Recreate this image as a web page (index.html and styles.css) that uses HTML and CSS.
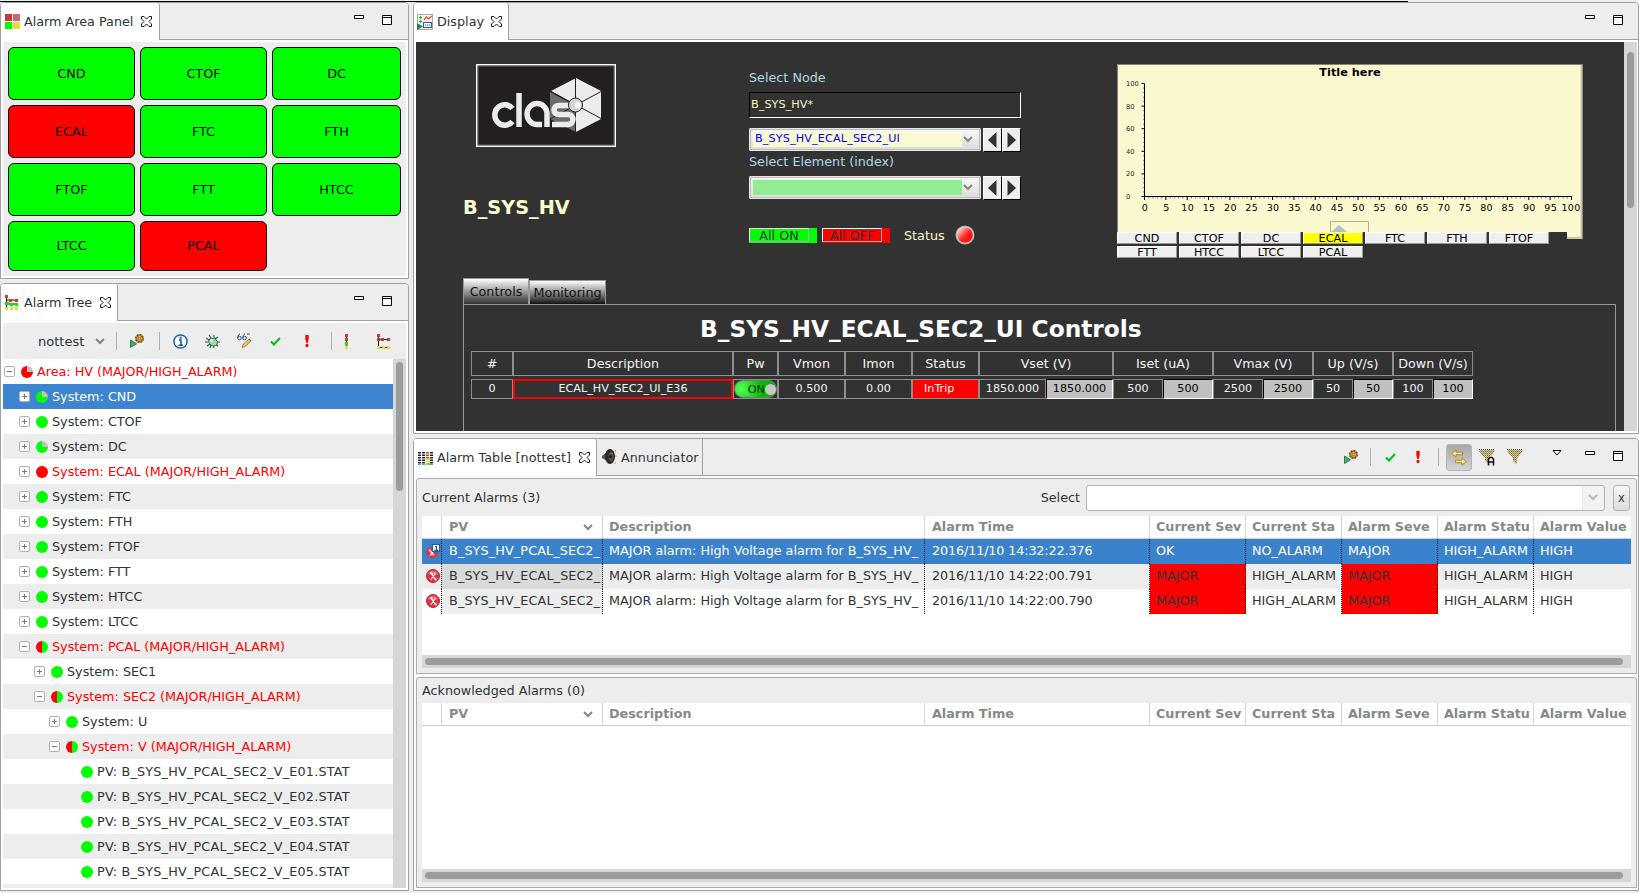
FILE: index.html
```html
<!DOCTYPE html>
<html lang="en">
<head>
<meta charset="utf-8">
<title>Alarm Console</title>
<link rel="stylesheet" href="styles.css">
</head>
<body>
<svg class="defs" width="0" height="0">
  <defs>
    <symbol id="close" viewBox="0 0 11 11"><path d="M.5.5H3L5.500 3 8 .5h2.500V3L8 5.500 10.500 8v2.500H8L5.500 8 3 10.500H.5V8L3 5.500.5 3z" fill="#fff" stroke="#1c1c1c"/></symbol>
    <symbol id="min" viewBox="0 0 10 4"><path d="M.5.5h9v3h-9z" fill="#fff" stroke="#000"/></symbol>
    <symbol id="max" viewBox="0 0 10 10"><path d="M.5.5h9v9h-9zM.5 2.500h9" fill="#fff" stroke="#000"/></symbol>
    <symbol id="chev" viewBox="0 0 10 7"><path d="M1 1l4 4 4-4" fill="none" stroke="#858585" stroke-width="2"/></symbol>
    <symbol id="plus" viewBox="0 0 11 11"><rect x=".5" y=".5" width="10" height="10" rx="1.500" fill="#fff" stroke="#b0b0b0"/><path d="M3 5.500h5M5.500 3v5" stroke="#777"/></symbol>
    <symbol id="minus" viewBox="0 0 11 11"><rect x=".5" y=".5" width="10" height="10" rx="1.500" fill="#fff" stroke="#b0b0b0"/><path d="M3 5.500h5" stroke="#777"/></symbol>
    <symbol id="run" viewBox="0 0 14 14"><path d="M.5 6v7.500L6.500 9.800z" fill="#4fa873" stroke="#2d8050"/><circle cx="9.500" cy="4.500" r="3.800" fill="#e2ad4a" stroke="#7a5213" stroke-width="1.600" stroke-dasharray="2 .9"/><circle cx="9.500" cy="4.500" r="3" fill="#e2ad4a" stroke="#7a5213" stroke-width=".8"/><circle cx="9.500" cy="4.500" r="1.200" fill="#fff4d0" stroke="#6b4510" stroke-width=".8"/></symbol>
    <symbol id="check" viewBox="0 0 11 9"><path d="M1 4.500l3 3L10 1" fill="none" stroke="#00c010" stroke-width="2"/></symbol>
    <symbol id="bang" viewBox="0 0 4 12"><path d="M.3 0h3.400v4L2.700 8H1.300L.3 4z" fill="#f00"/><rect x=".5" y="9" width="3" height="3" rx="1" fill="#f00"/></symbol>
    <symbol id="err" viewBox="0 0 14 14"><circle cx="7" cy="7" r="6.500" fill="#e0323f" stroke="#b02a35"/><path d="M2 5a5.500 5.500 0 0 1 10 0c-3 1.500-7 1.500-10 0z" fill="#f08088" opacity=".7"/><path d="M5 4l4.500 6.500M9.500 4L5 10.500M4 4h2.500M8.500 10.500H11" stroke="#fff" stroke-width="1.300"/></symbol>
    <pattern id="dither" width="2" height="2" patternUnits="userSpaceOnUse"><rect width="2" height="2" fill="#e3cd8e"/><rect width="1" height="1" fill="#6f6a50"/><rect x="1" y="1" width="1" height="1" fill="#9a8f68"/></pattern>
    <symbol id="funnel" viewBox="0 0 16 16"><path d="M.5 1h15v2L10 9v6.500L6 12V9L.5 3z" fill="url(#dither)"/><path d="M0 .5h16" stroke="#444" stroke-dasharray="1 1"/></symbol>
    <linearGradient id="led" x2="1" y2="1"><stop stop-color="#fff"/><stop offset=".55" stop-color="#f22"/><stop offset="1" stop-color="#f00"/></linearGradient>
  </defs>
</svg>

<div class="topline"></div>
<div class="workbench">
  <div class="left">
    <section class="view area">
      <header class="tabs">
        <div class="tab active">
          <svg class="ico" width="15" height="15"><path fill="#cf3636" d="M0 0h7v7H0z"/><path fill="#c86a6a" d="M8 0h7v7H8z"/><path fill="#0f0" d="M0 8h7v7H0z"/><path fill="#e9d93c" d="M8 8h7v7H8z"/></svg>
          <span class="lbl">Alarm Area Panel</span><svg class="x" width="11" height="11"><use href="#close"/></svg>
        </div>
        <div class="winbtns"><svg width="10" height="4"><use href="#min"/></svg><svg width="10" height="10"><use href="#max"/></svg></div>
      </header>
      <div class="area-grid">
        <b>CND</b><b>CTOF</b><b>DC</b>
        <b class="bad">ECAL</b><b>FTC</b><b>FTH</b>
        <b>FTOF</b><b>FTT</b><b>HTCC</b>
        <b class="last">LTCC</b><b class="bad last">PCAL</b>
      </div>
    </section>

    <section class="view tree">
      <header class="tabs">
        <div class="tab active">
          <svg class="ico" width="15" height="15"><path d="M1.500 0v14M2 5h11M2 9h11" stroke="#111" fill="none"/><path fill="#cf3636" d="M0 0h3v3H0zM4 4h3v3H4zM10 4h3v3h-3z"/><path fill="#0e0" d="M0 7h4v3H0zM5 8h3v3H5zM10 8h3v3h-3z"/><path fill="#e9d93c" d="M0 12h3v3H0zM5 12h3v3H5zM10 12h3v3h-3z"/></svg>
          <span class="lbl">Alarm Tree</span><svg class="x" width="11" height="11"><use href="#close"/></svg>
        </div>
        <div class="winbtns"><svg width="10" height="4"><use href="#min"/></svg><svg width="10" height="10"><use href="#max"/></svg></div>
      </header>
      <div class="toolbar">
        <span class="cfg">nottest</span><svg class="t-chev" width="10" height="7"><use href="#chev"/></svg>
        <i class="sep"></i>
        <svg class="t-run" width="14" height="14"><use href="#run"/></svg>
        <i class="sep s2"></i>
        <svg class="t-info" width="15" height="15" viewBox="0 0 15 15"><circle cx="7.500" cy="7.500" r="6.600" fill="#fff" stroke="#1762b4" stroke-width="1.500"/><path d="M6 6h2v5M5.500 11.300h4.500" stroke="#0d4fa0" stroke-width="1.500" fill="none"/><rect x="6.600" y="2.700" width="2" height="2" fill="#0d4fa0"/></svg>
        <svg class="t-bug" width="15" height="15" viewBox="0 0 15 15"><path d="M1 4l3 2M0 8h3M2 12l3-2M4 1l2 3M9 1v3M13 3l-3 2M15 8h-4M13 12l-3-2M9 14l-1-3M5 14l1-3" stroke="#1d5a4c" stroke-width="1.100"/><ellipse cx="8" cy="8" rx="4.500" ry="3.600" fill="#a8d89a" stroke="#1d6a5c" transform="rotate(30 8 8)"/><circle cx="6.500" cy="6.500" r="1.200" fill="#e6ffe0"/></svg>
        <svg class="t-edit" width="15" height="16" viewBox="0 0 15 16"><path d="M3 .8C1 2 .5 4 1 5M8 .8C6.500 1.500 6 3 6 5M10 1h3" stroke="#35528c" fill="none"/><circle cx="2.500" cy="5" r="1.800" fill="none" stroke="#35528c"/><circle cx="7.500" cy="5" r="1.800" fill="none" stroke="#35528c"/><path d="M5 14.500l1-3L12 6l2 2-6 5.500z" fill="#efc36b" stroke="#8c6b38" stroke-width=".8"/><path d="M12 6l2 2" stroke="#777" stroke-width="1.500"/></svg>
        <svg class="t-check" width="11" height="9"><use href="#check"/></svg>
        <svg class="t-bang" width="4" height="12"><use href="#bang"/></svg>
        <i class="sep s3"></i>
        <svg class="t-col" width="3" height="15"><path d="M1.500 0v15" stroke="#111"/><path fill="#cf3636" d="M0 0h3v3H0zM0 4h3v3H0z"/><path fill="#0e0" d="M0 8h3v3H0z"/><path fill="#e9d93c" d="M0 12h3v3H0z"/></svg>
        <svg class="t-exp" width="13" height="15"><path d="M1.500 0v14M2 5.500h11M2 13.500h11" stroke="#111" fill="none"/><path fill="#cf3636" d="M0 0h3v3H0zM4 4h3v3H4zM10 4h3v3h-3zM0 4h3v3H0z"/><path fill="#e9d93c" d="M0 12h3v3H0zM5 12h3v3H5zM10 12h3v3h-3z"/></svg>
      </div>
      <div class="tree-body">
        <ul class="nodes">
          <li class="l0 alarm"><svg width="11" height="11"><use href="#minus"/></svg><i class="dot r q"></i>Area: HV (MAJOR/HIGH_ALARM)</li>
          <li class="l1 sel"><svg width="11" height="11"><use href="#plus"/></svg><i class="dot q"></i>System: CND</li>
          <li class="l1"><svg width="11" height="11"><use href="#plus"/></svg><i class="dot"></i>System: CTOF</li>
          <li class="l1"><svg width="11" height="11"><use href="#plus"/></svg><i class="dot q"></i>System: DC</li>
          <li class="l1 alarm"><svg width="11" height="11"><use href="#plus"/></svg><i class="dot r"></i>System: ECAL (MAJOR/HIGH_ALARM)</li>
          <li class="l1"><svg width="11" height="11"><use href="#plus"/></svg><i class="dot"></i>System: FTC</li>
          <li class="l1"><svg width="11" height="11"><use href="#plus"/></svg><i class="dot"></i>System: FTH</li>
          <li class="l1"><svg width="11" height="11"><use href="#plus"/></svg><i class="dot"></i>System: FTOF</li>
          <li class="l1"><svg width="11" height="11"><use href="#plus"/></svg><i class="dot"></i>System: FTT</li>
          <li class="l1"><svg width="11" height="11"><use href="#plus"/></svg><i class="dot"></i>System: HTCC</li>
          <li class="l1"><svg width="11" height="11"><use href="#plus"/></svg><i class="dot"></i>System: LTCC</li>
          <li class="l1 alarm"><svg width="11" height="11"><use href="#minus"/></svg><i class="dot h"></i>System: PCAL (MAJOR/HIGH_ALARM)</li>
          <li class="l2"><svg width="11" height="11"><use href="#plus"/></svg><i class="dot"></i>System: SEC1</li>
          <li class="l2 alarm"><svg width="11" height="11"><use href="#minus"/></svg><i class="dot h"></i>System: SEC2 (MAJOR/HIGH_ALARM)</li>
          <li class="l3"><svg width="11" height="11"><use href="#plus"/></svg><i class="dot"></i>System: U</li>
          <li class="l3 alarm"><svg width="11" height="11"><use href="#minus"/></svg><i class="dot h"></i>System: V (MAJOR/HIGH_ALARM)</li>
          <li class="pv"><i class="dot"></i>PV: B_SYS_HV_PCAL_SEC2_V_E01.STAT</li>
          <li class="pv"><i class="dot"></i>PV: B_SYS_HV_PCAL_SEC2_V_E02.STAT</li>
          <li class="pv"><i class="dot"></i>PV: B_SYS_HV_PCAL_SEC2_V_E03.STAT</li>
          <li class="pv"><i class="dot"></i>PV: B_SYS_HV_PCAL_SEC2_V_E04.STAT</li>
          <li class="pv"><i class="dot"></i>PV: B_SYS_HV_PCAL_SEC2_V_E05.STAT</li>
          <li></li>
        </ul>
        <div class="vbar"><i></i></div>
      </div>
    </section>
  </div>

  <div class="right">
    <section class="view display">
      <header class="tabs">
        <div class="tab active">
          <svg class="ico" width="16" height="16" viewBox="0 0 16 16"><rect x=".5" y=".5" width="15" height="15" fill="#f2f2f2" stroke="#aaa"/><path d="M7 6l2.500-3 2 2L15 2" stroke="#e8501c" fill="none" stroke-width="1.200"/><path d="M3.500 2v3M2 3.500h3M3.500 6v3M2 7.500h3" stroke="#0c0"/><rect x="6.500" y="8.500" width="8" height="5" fill="#fff" stroke="#1c62d0"/><path d="M8 11h5" stroke="#444" stroke-dasharray="1 1"/><path d="M0 9v7l6-3.500z" fill="#2a8040"/></svg>
          <span class="lbl">Display</span><svg class="x" width="11" height="11"><use href="#close"/></svg>
        </div>
        <div class="winbtns"><svg width="10" height="4"><use href="#min"/></svg><svg width="10" height="10"><use href="#max"/></svg></div>
      </header>
      <div class="scroller">
        <div class="screen">
          <div class="top">
            <div class="brand">
              <svg class="logo" width="140" height="83" viewBox="0 0 140 83">
                <rect x=".75" y=".75" width="138.500" height="81.500" fill="#231f20" stroke="#fff" stroke-width="1.500"/><rect x="2" y="2" width="136" height="79" fill="none" stroke="#777" stroke-width=".8"/>
                <path d="M74 28l26 14v26L74 55z" fill="#6c6c6c"/>
                <path d="M100 14l25 13v28l-25 13V41L75 27z" fill="#ececec"/>
                <path d="M99.500 14v54M100 41l26-14M100 41l26 14M100 41L74 27M100 41L74 55" stroke="#231f20" stroke-width="1"/>
                <g fill="none" stroke="#ececec" stroke-width="5.500"><path d="M36.500 44.500a10 10.200 0 1 0 0 13"/><path d="M43 29v34"/><path d="M71 63V51a10 10.500 0 1 0-10 9.500h5"/><path d="M97 41.500H82.500a4.500 4.500 0 0 0 0 9H92a4.700 4.700 0 0 1 0 10H76"/></g>
                <circle cx="99.500" cy="41" r="7" fill="#d4d4d4" stroke="#231f20"/><circle cx="102" cy="41" r="3" fill="#f6f6f6"/>
              </svg>
              <div class="sysname">B_SYS_HV</div>
            </div>
            <div class="picker">
              <label>Select Node</label>
              <div class="field">B_SYS_HV*</div>
              <div class="pick-row">
                <div class="combo"><span class="val">B_SYS_HV_ECAL_SEC2_UI</span><svg width="10" height="7"><use href="#chev"/></svg></div>
                <div class="arrow"><svg width="9" height="16"><path d="M8.500 0v16L0 8z" fill="#2e3436"/></svg></div>
                <div class="arrow"><svg width="9" height="16"><path d="M.5 0v16L9 8z" fill="#2e3436"/></svg></div>
              </div>
              <label class="second">Select Element (index)</label>
              <div class="pick-row">
                <div class="combo"><span class="val green"></span><svg width="10" height="7"><use href="#chev"/></svg></div>
                <div class="arrow"><svg width="9" height="16"><path d="M8.500 0v16L0 8z" fill="#2e3436"/></svg></div>
                <div class="arrow"><svg width="9" height="16"><path d="M.5 0v16L9 8z" fill="#2e3436"/></svg></div>
              </div>
              <div class="power">
                <div class="all on"><span>All ON</span></div><div class="all off"><span>All OFF</span></div>
                <span class="st">Status</span>
                <svg width="20" height="20"><circle cx="10" cy="10" r="9.500" fill="#aaa"/><circle cx="10" cy="10" r="8.600" fill="#d8d8d8"/><circle cx="10" cy="10" r="7.800" fill="url(#led)"/></svg>
              </div>
            </div>
            <div class="plotbox">
              <svg id="plot" class="plot" width="466" height="175"></svg>
              <div class="secs">
                <span>CND</span><span>CTOF</span><span>DC</span><span class="cur">ECAL</span><span>FTC</span><span>FTH</span><span>FTOF</span>
                <span>FTT</span><span>HTCC</span><span>LTCC</span><span>PCAL</span>
              </div>
            </div>
          </div>
          <div class="hv-tabs"><div class="hv-tab cur">Controls</div><div class="hv-tab">Monitoring</div></div>
          <div class="hv-body">
            <h1>B_SYS_HV_ECAL_SEC2_UI Controls</h1>
            <div class="hv-head"><span>#</span><span>Description</span><span>Pw</span><span>Vmon</span><span>Imon</span><span>Status</span><span>Vset (V)</span><span>Iset (uA)</span><span>Vmax (V)</span><span>Up (V/s)</span><span>Down (V/s)</span></div>
            <div class="hv-row"><span>0</span><span class="desc">ECAL_HV_SEC2_UI_E36</span><span class="pw"><em>ON<i></i></em></span><span>0.500</span><span>0.00</span><span class="trip">InTrip</span><span>1850.000</span><span class="in">1850.000</span><span>500</span><span class="in">500</span><span>2500</span><span class="in">2500</span><span>50</span><span class="in">50</span><span>100</span><span class="in">100</span></div>
          </div>
        </div>
        <div class="vbar"><i></i></div>
      </div>
    </section>

    <section class="view table">
      <header class="tabs">
        <div class="tab active">
          <svg class="ico" width="15" height="14" viewBox="0 0 15 14"><g stroke-dasharray="1.500 1" stroke-width="3"><path d="M1.500 1v13M5.500 1v13M13.500 1v13" stroke="#222"/><path d="M9.500 1v7" stroke="#cf3636"/></g><path d="M8 8.500h4M8 10.500h4" stroke="#e9d93c" stroke-width="1.300"/><path d="M8 13h4" stroke="#0e0" stroke-width="1.500"/></svg>
          <span class="lbl">Alarm Table [nottest]</span><svg class="x" width="11" height="11"><use href="#close"/></svg>
        </div>
        <div class="tab idle">
          <svg width="15" height="16" viewBox="0 0 15 16"><path d="M0 7l5-4v9L0 9z" fill="#555"/><ellipse cx="8" cy="7.500" rx="5" ry="7.500" fill="#2b2b2b"/><ellipse cx="9" cy="7.500" rx="2.500" ry="4.500" fill="#555"/><circle cx="8.500" cy="7.500" r="1.500" fill="#111"/><path d="M13.500 1v2M14 6v2M13 13v2M10 4v1" stroke="#e0a030"/></svg>
          <span class="lbl">Annunciator</span>
        </div>
        <div class="tbl-tools">
          <svg class="a-run" width="14" height="14"><use href="#run"/></svg><i class="sep"></i>
          <svg class="a-check" width="11" height="9"><use href="#check"/></svg>
          <svg class="a-bang" width="4" height="12"><use href="#bang"/></svg><i class="sep"></i>
          <div class="toggle"><svg width="16" height="17" viewBox="0 0 16 17"><path d="M.8 4.500L5 .8v2.400h6.500v2.600H5v2.400z" fill="#fbe8a0" stroke="#b8811c"/><path d="M15.200 12.500L11 8.800v2.400H4.500v2.600H11v2.400z" fill="#fbe8a0" stroke="#b8811c"/></svg></div>
          <div class="fa"><svg width="16" height="16"><use href="#funnel"/></svg><svg class="letter" width="8" height="10"><path d="M1.500 9.500V3L3 1.500h2L6.500 3v6.500M1.500 6h5" fill="none" stroke="#111" stroke-width="1.600"/></svg></div>
          <svg class="a-fun" width="16" height="16"><use href="#funnel"/></svg>
          <svg class="a-menu" width="10" height="6"><path d="M1 .5h8L5 5z" fill="#fff" stroke="#000"/></svg>
        </div>
        <div class="winbtns"><svg width="10" height="4"><use href="#min"/></svg><svg width="10" height="10"><use href="#max"/></svg></div>
      </header>
      <div class="panes">
        <div class="pane cur-pane">
          <div class="pane-top"><span>Current Alarms (3)</span><span class="sel-lbl">Select</span><div class="select"><svg width="10" height="7"><use href="#chev"/></svg></div><div class="clear">x</div></div>
          <div class="grid">
            <div class="row head"><span></span><span class="sorted">PV<svg width="10" height="7"><use href="#chev"/></svg></span><span>Description</span><span>Alarm Time</span><span>Current Sev</span><span>Current Sta</span><span>Alarm Seve</span><span>Alarm Statu</span><span>Alarm Value</span></div>
            <div class="row sel"><span class="ic"><svg width="14" height="16" viewBox="0 0 14 16"><circle cx="6" cy="9.500" r="5.800" fill="#de3340"/><path d="M3 6.500l5 6M8 7l-4 6" stroke="#fff" stroke-width="1.300"/><rect x="6.500" y="1.500" width="7" height="7" fill="#fff" stroke="#1c5fae"/><path d="M9 3.500h1.500v4M8.500 7.300h4" stroke="#1c4f9e" stroke-width="1.200" fill="none"/></svg></span><span class="pvn">B_SYS_HV_PCAL_SEC2_</span><span>MAJOR alarm: High Voltage alarm for B_SYS_HV_</span><span class="time">2016/11/10 14:32:22.376</span><span>OK</span><span>NO_ALARM</span><span>MAJOR</span><span>HIGH_ALARM</span><span>HIGH</span></div>
            <div class="row odd"><span class="ic"><svg width="14" height="14"><use href="#err"/></svg></span><span class="pvn pvc">B_SYS_HV_ECAL_SEC2_</span><span>MAJOR alarm: High Voltage alarm for B_SYS_HV_</span><span class="time">2016/11/10 14:22:00.791</span><span class="major">MAJOR</span><span>HIGH_ALARM</span><span class="major">MAJOR</span><span>HIGH_ALARM</span><span>HIGH</span></div>
            <div class="row"><span class="ic"><svg width="14" height="14"><use href="#err"/></svg></span><span class="pvn pvc">B_SYS_HV_ECAL_SEC2_</span><span>MAJOR alarm: High Voltage alarm for B_SYS_HV_</span><span class="time">2016/11/10 14:22:00.790</span><span class="major">MAJOR</span><span>HIGH_ALARM</span><span class="major">MAJOR</span><span>HIGH_ALARM</span><span>HIGH</span></div>
          </div>
          <div class="hbar"><i></i></div>
        </div>
        <div class="pane ack-pane">
          <div class="pane-top"><span>Acknowledged Alarms (0)</span></div>
          <div class="grid">
            <div class="row head"><span></span><span class="sorted">PV<svg width="10" height="7"><use href="#chev"/></svg></span><span>Description</span><span>Alarm Time</span><span>Current Sev</span><span>Current Sta</span><span>Alarm Seve</span><span>Alarm Statu</span><span>Alarm Value</span></div>
          </div>
          <div class="hbar"><i></i></div>
        </div>
      </div>
    </section>
  </div>
</div>
<script src="plot.js"></script>
</body>
</html>
```

FILE: plot.js
```js
// Draws the empty trend plot: frame, title, both axes with their ticks, and the range marker.
(function () {
  var x0 = 27.5, x1 = 454.5, y0 = 132.5, y1 = 19.5;
  var out = '<rect x="0" y="0" width="466" height="175" fill="#fbf8cf"/>' +
    '<path d="M.5 175V.5H465.500" stroke="#84847c" fill="none"/><path d="M464.500 1V174H0" stroke="#c9c7a8" stroke-width="2" fill="none"/><path d="M465.500 0V175" stroke="#8c8b7c"/>' +
    '<text class="p-title" x="233" y="12">Title here</text>' +
    '<path d="M' + x0 + ' ' + y1 + 'V' + y0 + 'H' + x1 + '" stroke="#000" fill="none"/>';
  var i, x, y;
  for (i = 0; i <= 100; i++) {
    x = x0 + (x1 - x0) * i / 100;
    out += '<path d="M' + x + ' ' + y0 + 'v' + (i % 5 ? 2 : 3.5) + '" stroke="#000" stroke-width="' + (i % 5 ? 0.5 : 1) + '"/>';
    if (i % 5 === 0) out += '<text class="p-x" x="' + (x + 0.5 - (i === 100 ? 1 : 0)) + '" y="147">' + i + '</text>';
  }
  for (i = 0; i <= 100; i += 4) {
    y = y0 + (y1 - y0) * i / 100;
    out += '<path d="M' + x0 + ' ' + y + 'h-' + (i % 20 ? 1.5 : 3) + '" stroke="#000" stroke-width="' + (i % 20 ? 0.5 : 1) + '"/>';
    if (i % 20 === 0) out += '<text class="p-y" x="9" y="' + (y + 2.5) + '">' + i + '</text>';
  }
  out += '<path d="M213.500 168V157.500H251.500V168" stroke="#b0af8f" fill="none"/><path d="M214 168l8-7 8 7z" fill="#adc6be"/>';
  document.getElementById('plot').innerHTML = out;
})();
```

FILE: styles.css
```css
* { box-sizing: border-box; }
body { margin: 0; padding-top: 1px; width: 1639px; height: 893px; overflow: hidden; background: #ededed; font: 12.75px/15px "DejaVu Sans", sans-serif; color: #2e3436; white-space: nowrap; }
svg { display: block; flex: none; }
.defs { position: absolute; }
.topline { width: 1408px; height: 1px; background: #000; }
.workbench { display: flex; gap: 4px; height: 891px; }
.left { width: 409px; display: flex; flex-direction: column; gap: 4px; }
.right { width: 1226px; display: flex; flex-direction: column; gap: 4px; }
.view { border: 1px solid #a0a0a0; border-radius: 4px 4px 0 0; background: #fff; display: flex; flex-direction: column; overflow: hidden; }
.tabs { display: flex; height: 37px; background: #ededed; border-bottom: 1px solid #a0a0a0; flex: none; }
.tab { display: flex; align-items: center; height: 37px; border-right: 1px solid #a0a0a0; flex: none; }
.tab.active { background: #fff; border-radius: 0 3px 0 0; padding-left: 4px; }
.tab .lbl { margin-left: 4px; }
.tab .x { margin-left: 8px; }
.tab.idle { height: 36px; padding-left: 5px; width: 106px; }
.winbtns { margin-left: auto; display: flex; gap: 18px; padding: 12px 16px 0 0; }
.right .winbtns { padding-right: 15px; }

.area { height: 277px; }
.area .tab { width: 159px; }
.area-grid { margin: 2px; flex: 1; background: #ededed; display: grid; grid-template-columns: 127px 127px 129px; grid-template-rows: 53px 53px 53px 50px; gap: 5px; padding: 5px; color: #000; }
.area-grid b { font-weight: normal; display: flex; align-items: center; justify-content: center; background: #0f0; border: 1px solid #000; border-radius: 6px; }
.area-grid b.bad { background: #f00; }
.area-grid b.last { padding-bottom: 2px; }

.tree { height: 608px; }
.tree .tab { width: 117px; }
.toolbar { margin: 2px 2px 0; height: 36px; background: #ededed; display: flex; align-items: center; flex: none; }
.cfg { width: 57px; margin-left: 35px; font-size: 13px; }
.sep { width: 1px; height: 18px; background: #b0b0b0; }
.toolbar .sep { margin-left: 11px; }
.t-run { margin-left: 13px; } .toolbar .s2 { margin-left: 15px; }
.t-info { margin-left: 13px; } .t-bug { margin-left: 17px; } .t-edit { margin-left: 17px; }
.t-check { margin-left: 18px; } .t-bang { margin-left: 24px; } .toolbar .s3 { margin-left: 22px; }
.t-col { margin-left: 13px; } .t-exp { margin-left: 29px; }
.tree-body { margin: 0 2px 2px; height: 529px; overflow: hidden; display: flex; }
.nodes { list-style: none; margin: 0; padding: 0; flex: 1; }
.nodes li { height: 25px; display: flex; align-items: center; }
.nodes li:nth-child(even) { background: #ededed; }
.nodes li.sel { background: #3d85d0; color: #fff; }
.alarm { color: #f00; }
.l0 { padding-left: 1px; } .l1 { padding-left: 16px; } .l2 { padding-left: 31px; } .l3 { padding-left: 46px; }
.nodes .pv { padding-left: 72px; letter-spacing: .2px; }
.dot { width: 12px; height: 12px; border-radius: 50%; background: #0f0; margin: 0 4px 0 6px; }
.dot.r { background: #f00; }
.dot.q { background: conic-gradient(#c0c0c0 90deg, #0f0 0); }
.dot.r.q { background: conic-gradient(#c0c0c0 90deg, #f00 0); }
.dot.h { background: linear-gradient(90deg, #f00 50%, #0f0 50%); }
.vbar { width: 13px; background: #d6d6d6; padding: 3px; flex: none; }
.vbar i { display: block; width: 7px; height: 129px; border-radius: 4px; background: #9b9c9d; }

.display { height: 432px; }
.display .tab { width: 95px; padding-left: 3px; }
.display .tab .x { margin-left: 7px; }
.scroller { margin: 2px 1px 2px 2px; flex: 1; display: flex; overflow: hidden; }
.screen { width: 1208px; height: 389px; background: #323232; overflow: hidden; }
.scroller .vbar { padding-top: 10px; }
.scroller .vbar i { height: 156px; }
.top { display: flex; height: 236px; padding-top: 22px; }
.brand { width: 333px; padding-left: 60px; }
.sysname { margin: 50px 0 0 -13px; font: bold 19.3px/22px "DejaVu Sans", sans-serif; color: #fcfccf; }
.picker { width: 272px; }
.picker label { display: block; color: #add8e6; margin: 6px 0 7px; }
.picker label.second { margin: 3px 0 7px; }
.field { height: 26px; border: 1px solid; border-color: #000 #fff #fff #000; color: #f6f4c4; font-size: 11.3px; line-height: 23px; padding-left: 1px; margin-bottom: 10px; }
.pick-row { display: flex; height: 23px; }
.combo { width: 232px; height: 23px; border: 1px solid #e8e8e8; outline: 1px solid #bbb; outline-offset: -2px; border-radius: 1px; background: linear-gradient(#f8f8f8, #dcdcdc); display: flex; align-items: center; padding-left: 3px; margin-right: 2px; }
.combo .val { width: 209px; height: 15px; margin-right: 1px; background: #fafad2; color: #00f; font-size: 11.2px; letter-spacing: .14px; line-height: 14px; padding-left: 2px; }
.combo .val.green { background: #90ee90; }
.arrow { width: 19px; height: 24px; background: #ededed; border: 1px solid; border-color: #fff #000 #000 #fff; display: flex; align-items: center; justify-content: center; padding-right: 1px; }
.power { display: flex; align-items: center; height: 20px; margin-top: 26px; }
.all { width: 68px; height: 15px; margin-right: 5px; flex: none; }
.all span { display: block; width: 60px; height: 14px; border: 1px solid; border-color: #fff #aaa #aaa #fff; text-align: center; line-height: 13px; }
.on { background: #0f0; } .off { background: #f00; }
.st { color: #fafad2; margin: 0 9px; width: 42px; }
.plotbox { margin-left: 96px; width: 466px; height: 196px; position: relative; }
.p-title { font: bold 11.3px "DejaVu Sans", sans-serif; text-anchor: middle; fill: #000; }
.p-x { font: 9.5px "DejaVu Sans", sans-serif; letter-spacing: .35px; text-anchor: middle; fill: #000; }
.p-y { font: 6.7px "DejaVu Sans", sans-serif; fill: #222; }
.secs { position: absolute; left: 0; top: 168px; width: 450px; height: 28px; background: #323232; display: grid; grid-template-columns: repeat(7, 60px); grid-auto-rows: 12px; gap: 2px; color: #000; font-size: 11.2px; text-align: center; }
.secs span { background: #efefef; border: 1px solid; border-color: #fff #999 #999 #fff; line-height: 11px; }
.secs .cur { background: #ff0; }
.hv-tabs { display: flex; align-items: flex-end; height: 26px; margin-left: 47px; color: #111; }
.hv-tab { height: 24px; width: 77px; border: 1px solid #999; border-bottom: 0; background: linear-gradient(#fff, #999 45%, #111); text-align: center; line-height: 23px; }
.hv-tab.cur { height: 26px; width: 66px; background: linear-gradient(#fff, #999 50%, #323232); line-height: 25px; }
.hv-body { margin-left: 47px; width: 1153px; height: 140px; border: 1px solid #999; color: #f4f4f4; }
h1 { margin: 11px 0 10px 236px; font: bold 23.3px/25px "DejaVu Sans", sans-serif; color: #fff; }
.hv-head, .hv-row { display: grid; margin-left: 7px; text-align: center; }
.hv-head { grid-template-columns: 42px 220px 45px 67px 67px 67px 134px 100px 100px 80px 80px; height: 25px; line-height: 23px; margin-bottom: 3px; font-size: 12.7px; }
.hv-row { grid-template-columns: 42px 220px 45px 67px 67px 67px 67px 67px 50px 50px 50px 50px 40px 40px 40px 40px; height: 20px; line-height: 17px; font-size: 11.2px; }
.hv-head span, .hv-row > span { border: 1px solid #8e8e8e; }
.hv-row .desc { border: 2px solid #f00; line-height: 15px; }
.hv-row .trip { background: #f00; text-align: left; padding-left: 11px; }
.hv-row .in { background: #c0c0c0; color: #000; border-color: #000 #fff #fff #000; }
.pw em { display: flex; align-items: center; justify-content: flex-end; height: 18px; width: 43px; border: 1px solid #777; border-radius: 9px; background: radial-gradient(circle at 15% 50%, #5f5, #0b0 60%); font-style: normal; color: #002a00; }
.pw i { width: 11px; height: 11px; border-radius: 50%; background: #c8c8c8; }

.table { height: 453px; }
.table .tabs, .table .tab.active { height: 37px; }
.table .tab.active { width: 183px; }
.tbl-tools { display: flex; align-items: center; margin-left: auto; height: 36px; }
.a-run { margin-right: 12px; } .a-check { margin: 0 20px 0 14px; } .a-bang { margin-right: 18px; }
.toggle { margin: 0 7px; width: 26px; height: 27px; border: 1px solid #b4b4b4; border-radius: 3px; background: linear-gradient(#a4a8a6, #d4d4d4); display: flex; align-items: center; justify-content: center; }
.fa { position: relative; margin-right: 12px; }
.letter { position: absolute; right: 0; bottom: -1px; }
.a-menu { margin: 0 23px 9px 29px; }
.table .winbtns { margin-left: 0; }
.panes { padding: 2px 0 2px 2px; flex: 1; display: flex; flex-direction: column; gap: 3px; background: #fafafa; }
.pane { border: 1px solid #adadad; border-radius: 3px 3px 0 0; background: #ededed; padding: 0 4px 5px 5px; display: flex; flex-direction: column; width: 1221px; }
.cur-pane { height: 196px; }
.ack-pane { height: 211px; }
.pane-top { display: flex; align-items: center; height: 37px; flex: none; }
.ack-pane .pane-top { height: 25px; }
.sel-lbl { margin-left: auto; }
.select { width: 519px; height: 26px; margin: 0 8px 0 6px; border: 1px solid #b4b4b4; border-radius: 3px; background: linear-gradient(90deg, #fff 495px, #ddd 495px, #f2f2f2 496px); display: flex; align-items: center; justify-content: flex-end; padding-right: 6px; }
.select svg { opacity: .5; }
.clear { width: 17px; height: 26px; border: 1px solid #b0b0b0; border-radius: 3px; background: linear-gradient(#f6f6f6, #dcdcdc); text-align: center; line-height: 25px; font-size: 11.5px; margin-right: 2px; }
.grid { flex: 1; background: #fff; width: 1209px; }
.row { display: grid; grid-template-columns: 20px 161px 322px 225px 96px 96px 96px 96px 97px; height: 25px; line-height: 24px; }
.row > span { overflow: hidden; padding-left: 6px; }
.row:not(.head) > span { border-right: 1px dotted #000; }
.row > span:nth-child(2), .row > span:nth-child(4) { padding-left: 7px; }
.row > span:last-child, .row:not(.head) > span:last-child { border-right: 0; }
.row .pvn { letter-spacing: .13px; }
.row .time { letter-spacing: -.12px; }
.row .ic { padding: 5px 0 0 4px; }
.row.sel .ic { padding-top: 4px; }
.head { height: 23px; border-bottom: 1px solid #cfcfcf; font-weight: bold; color: #888; line-height: 22px; }
.head > span { border-right: 1px solid #d8d8d8; box-shadow: inset -3px 0 #fff; }
.sorted { display: flex; align-items: center; justify-content: space-between; }
.head .sorted { padding-right: 9px; }
.row.sel { background: #3b82cd; color: #fff; }
.row.odd { background: #ededed; }
.odd .pvc { background: #dadada; }
.pvc { background: #ededed; }
.row .major { background: #f00; }
.hbar { height: 13px; width: 1209px; background: #d6d6d6; padding: 3px; flex: none; }
.hbar i { display: block; width: 1198px; height: 7px; border-radius: 4px; background: #9b9c9d; }
```
